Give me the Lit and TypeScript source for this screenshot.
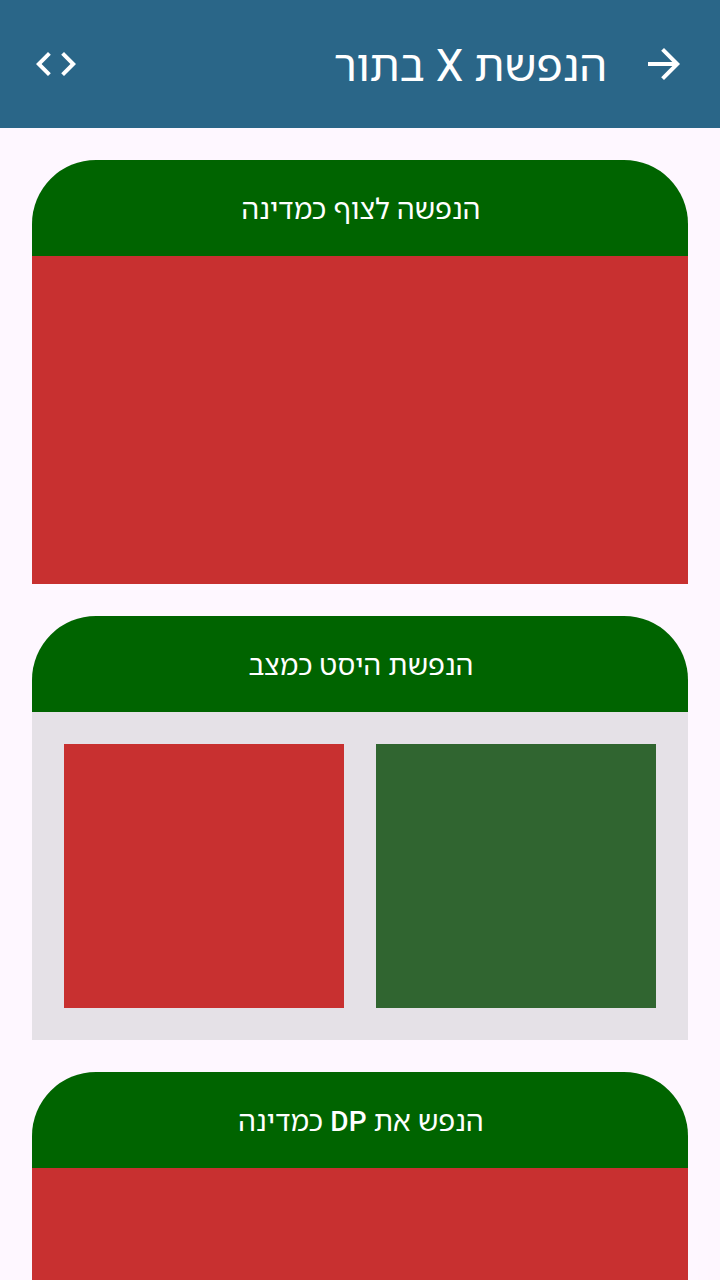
import { LitElement, html, css } from "lit";
import { customElement, property } from "lit/decorators.js";

const withLatin = (text: string) =>
  text.split(/([A-Z]+)/).map((part) => (/[A-Z]/.test(part) ? html`<b>${part}</b>` : part));

@customElement("animation-card")
class AnimationCard extends LitElement {
  @property() heading = "";
  @property({ type: Boolean }) split = false;
  static styles = css`
    :host { display: block; flex: none; }
    .title { height: 96px; box-sizing: border-box; padding: 4px 0 0 2px; border-radius: 64px 64px 0 0; background: #006400; color: #fff;
      display: flex; align-items: center; justify-content: center;
      font-size: 28px; font-weight: 400; line-height: 40px; letter-spacing: 0.13px; white-space: nowrap; }
    b { font-weight: 500; }
    .body { height: 328px; background: #c83030; }
    .pair { height: 264px; padding: 32px; display: grid; grid-template-columns: 1fr 1fr; gap: 32px; background: #e5e1e7; }
    .green { background: #306530; }
    .red { background: #c83030; }
  `;
  render() {
    return html`<div class="title"><span>${withLatin(this.heading)}</span></div>
      ${this.split
        ? html`<div class="pair"><div class="green"></div><div class="red"></div></div>`
        : html`<div class="body"></div>`}`;
  }
}

@customElement("app-root")
class AppRoot extends LitElement {
  static styles = css`
    :host { display: flex; flex-direction: column; height: 1280px; overflow: hidden; direction: rtl;
      background: #fef7ff; font-family: Roboto, "Noto Sans Hebrew", "Noto Sans", sans-serif; }
    header { flex: none; height: 128px; box-sizing: border-box; padding: 0 32px; display: flex; align-items: center;
      background: #2a6688; color: #fff; }
    svg { width: 48px; height: 48px; fill: #fff; display: block; }
    h1 { margin: 0; margin-inline-start: 33px; padding-top: 4px; flex: 1; font-size: 44px; font-weight: 400; line-height: 56px; white-space: nowrap; }
    h1 b { font-weight: 400; }
    main { display: flex; flex-direction: column; gap: 32px; padding: 32px; }
  `;
  render() {
    return html`
      <header>
        <svg viewBox="0 0 24 24"><path d="M12 4l-1.41 1.41L16.17 11H4v2h12.17l-5.58 5.59L12 20l8-8z" /></svg>
        <h1><span>${withLatin("הנפשת X בתור")}</span></h1>
        <svg viewBox="0 0 24 24"><path d="M9.4 16.6 4.8 12l4.6-4.6L8 6l-6 6 6 6 1.4-1.4zm5.2 0 4.6-4.6-4.6-4.6L16 6l6 6-6 6-1.4-1.4z" /></svg>
      </header>
      <main>
        <animation-card heading="הנפשה לצוף כמדינה"></animation-card>
        <animation-card heading="הנפשת היסט כמצב" split></animation-card>
        <animation-card heading="הנפש את DP כמדינה"></animation-card>
      </main>`;
  }
}
